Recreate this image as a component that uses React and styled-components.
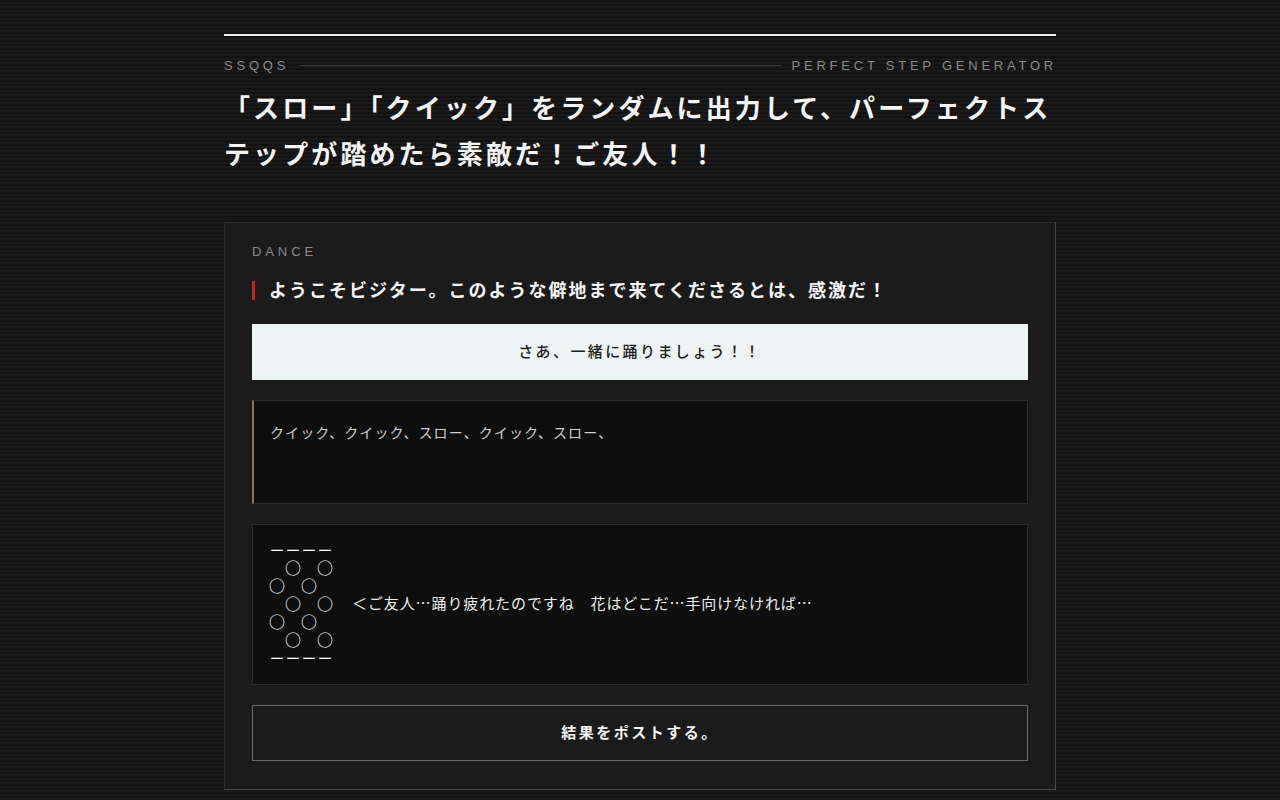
import React from "react";
import styled, { createGlobalStyle } from "styled-components";

const Global = createGlobalStyle`
  html, body {
    margin: 0;
    padding: 0;
  }
  body {
    min-height: 800px;
    background-color: #141414;
    background-image: repeating-linear-gradient(
      180deg,
      #121212 0px,
      #121212 2px,
      #1a1a1a 2px,
      #1a1a1a 4px
    );
    color: #f2f2f2;
    font-family: "Noto Sans CJK JP", "Noto Sans", sans-serif;
  }
`;

const Page = styled.main`
  width: 832px;
  margin: 0 auto;
  padding: 34px 0 40px;
`;

const TopRule = styled.div`
  height: 2px;
  background: #ededed;
`;

const Masthead = styled.div`
  display: flex;
  align-items: center;
  gap: 11px;
  height: 20px;
  margin-top: 19px;
`;

const Kicker = styled.span`
  font-family: "Liberation Sans", Arial, sans-serif;
  font-size: 13px;
  letter-spacing: 0.29em;
  color: #8a8a8a;
  white-space: nowrap;
  margin-right: ${(p) => (p.$last ? "-1px" : "0")};
`;

const Hairline = styled.span`
  flex: 1;
  height: 1px;
  background: #3a3a3a;
`;

const Title = styled.h1`
  margin: 9px 0 0;
  font-size: 26px;
  line-height: 46px;
  font-weight: 700;
  letter-spacing: 3.1px;
  color: #f4f4f4;
`;

const Card = styled.section`
  margin-top: 46px;
  background: #1b1b1b;
  border: 1px solid #2e2e2e;
  border-right-color: #4a4a4a;
  border-bottom-color: #4a4a4a;
  padding: 20px 27px 28px;
  display: flex;
  flex-direction: column;
`;

const Label = styled.div`
  font-family: "Liberation Sans", Arial, sans-serif;
  font-size: 13px;
  line-height: 18px;
  letter-spacing: 0.3em;
  color: #8a8a8a;
`;

const Lead = styled.h2`
  margin: 15px 0 0;
  display: flex;
  align-items: center;
  gap: 14px;
  font-size: 18px;
  line-height: 26px;
  font-weight: 700;
  letter-spacing: 2px;
  color: #f4f4f4;

  &::before {
    content: "";
    width: 3px;
    height: 19px;
    margin-top: 2px;
    background: #c8201e;
    flex: none;
  }
`;

const Stack = styled.div`
  margin-top: 22px;
  display: flex;
  flex-direction: column;
  gap: 20px;
`;

const Button = styled.button`
  height: 56px;
  width: 100%;
  padding: 0 0 4px;
  font-family: "Noto Sans CJK JP", sans-serif;
  font-size: 15px;
  letter-spacing: ${(p) => (p.$ghost ? "2.5px" : "2.4px")};
  cursor: pointer;
  font-weight: ${(p) => (p.$ghost ? 700 : 500)};
  color: ${(p) => (p.$ghost ? "#f4f4f4" : "#1c1c1c")};
  background: ${(p) => (p.$ghost ? "transparent" : "#eef3f3")};
  border: 1px solid ${(p) => (p.$ghost ? "#6a6a6a" : "#eef3f3")};
`;

const Panel = styled.div`
  background: #0e0e0e;
  border: 1px solid #2c2c2c;
  border-left: ${(p) => (p.$accent ? "2px solid #8a7462" : "1px solid #2c2c2c")};
  min-height: ${(p) => p.$h}px;
  box-sizing: border-box;
`;

const Steps = styled.p`
  margin: 0;
  padding: 20px 16px;
  font-size: 14px;
  line-height: 22px;
  letter-spacing: 1.1px;
  color: #cfcfcf;
`;

const Scene = styled.div`
  display: flex;
  align-items: center;
  gap: 19px;
  padding: 11px 16px 15px;
  min-height: 159px;
  box-sizing: border-box;
`;

const Art = styled.pre`
  margin: 0;
  font-family: "Noto Sans CJK JP", monospace;
  font-size: 16px;
  line-height: 18px;
  font-weight: 500;
  color: #ffffff;
`;

const Whisper = styled.p`
  margin: 0;
  font-size: 15px;
  line-height: 22px;
  letter-spacing: 0.06em;
  color: #ececec;
`;

const figure = [
  "－－－－",
  "　○　○",
  "○　○",
  "　○　○",
  "○　○",
  "　○　○",
  "－－－－",
].join("\n");

export default function App() {
  return (
    <>
      <Global />
      <Page>
        <TopRule />
        <Masthead>
          <Kicker>SSQQS</Kicker>
          <Hairline />
          <Kicker $last>PERFECT STEP GENERATOR</Kicker>
        </Masthead>
        <Title>
          「スロー」「クイック」をランダムに出力して、パーフェクトステップが踏めたら素敵だ！ご友人！！
        </Title>

        <Card>
          <Label>DANCE</Label>
          <Lead>ようこそビジター。このような僻地まで来てくださるとは、感激だ！</Lead>
          <Stack>
            <Button>さあ、一緒に踊りましょう！！</Button>
            <Panel $accent $h={104}>
              <Steps>クイック、クイック、スロー、クイック、スロー、</Steps>
            </Panel>
            <Panel $h={161}>
              <Scene>
                <Art>{figure}</Art>
                <Whisper>＜ご友人…踊り疲れたのですね　花はどこだ…手向けなければ…</Whisper>
              </Scene>
            </Panel>
            <Button $ghost>結果をポストする。</Button>
          </Stack>
        </Card>
      </Page>
    </>
  );
}
